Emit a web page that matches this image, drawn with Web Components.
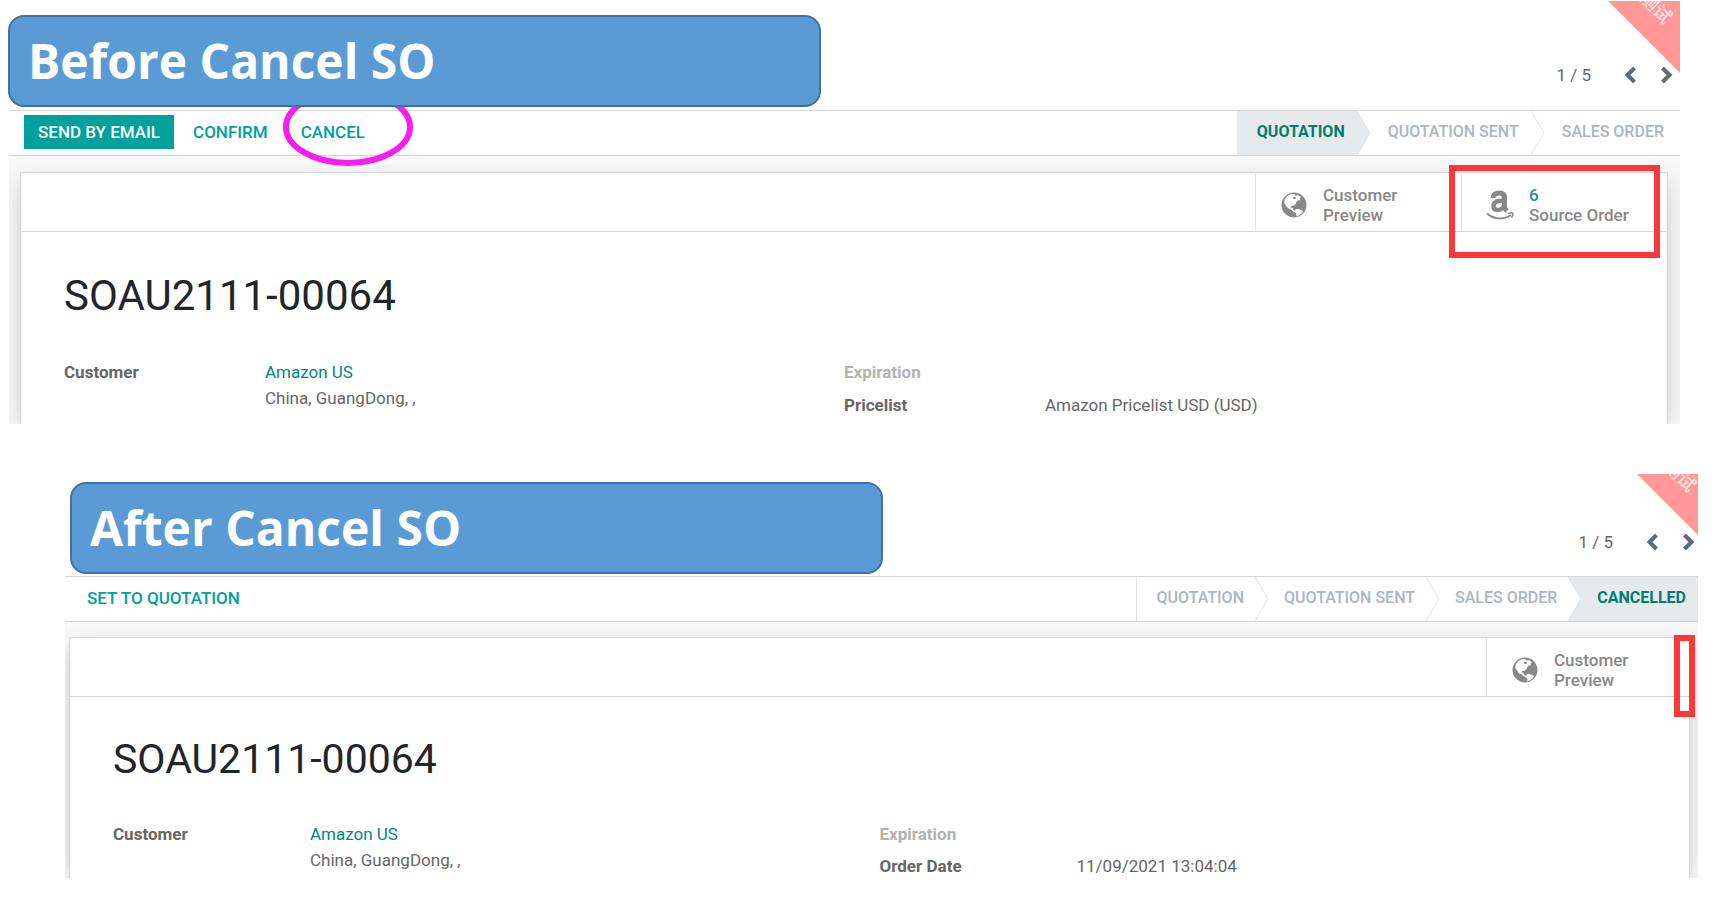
<!DOCTYPE html>
<html lang="en">
<head>
<meta charset="UTF-8">
<meta name="viewport" content="width=device-width, initial-scale=1.0">
<title>Cancel SO</title>
<style>
  body {
    margin: 0;
    padding: 1px 0 22px;
    background: #fff;
    color: #666;
    font-family: Roboto, "Noto Sans CJK SC", sans-serif;
    font-size: 17px;
  }
  .before {
    margin: 0 33px 0 9px;
    --header-height: 109px;
    --banner-margin: 14px 0 0 -1px;
    --pager-top: 62px;
    --title-size: 42px;
    --bar-left: 15px;
    --sheet-margin: 16px 12px 0 11px;
    --sheet-pad: 43px;
    --label-width: 201px;
    --stat-width: 206px;
    --row-gap: 13px;
    --title-top: 39px;
    --fields-top: 41px;
    --fields-bottom: 9px;
    --ribbon-size: 72px;
    --ribbon-right: 18px;
    --ribbon-bottom: 26px;
    --step-left: 17px;
    --step-right: 12px;
    --step-end: 16px;
  }
  .after {
    margin: 50px 15px 0 65px;
    --header-height: 102px;
    --banner-margin: 8px 0 0 5px;
    --pager-top: 56px;
    --title-size: 41px;
    --bar-left: 8px;
    --sheet-margin: 15px 8px 0 4px;
    --sheet-pad: 43px;
    --label-width: 197px;
    --stat-width: 203px;
    --row-gap: 12px;
    --title-top: 37px;
    --fields-top: 40px;
    --fields-bottom: 2px;
    --ribbon-size: 61px;
    --ribbon-right: 12px;
    --ribbon-bottom: 21px;
    --step-left: 15px;
    --step-right: 11px;
    --step-end: 12px;
  }
</style>
</head>
<body>
  <order-panel class="before" name="SOAU2111-00064">
    <title-banner slot="banner">Before Cancel SO</title-banner>
    <record-pager slot="pager">1 / 5</record-pager>
    <action-button slot="actions" primary>Send by Email</action-button>
    <action-button slot="actions">Confirm</action-button>
    <action-button slot="actions" ring>Cancel</action-button>
    <status-step slot="steps" active>Quotation</status-step>
    <status-step slot="steps">Quotation Sent</status-step>
    <status-step slot="steps">Sales Order</status-step>
    <stat-button slot="stats" icon="globe">Customer<br>Preview</stat-button>
    <stat-button slot="stats" icon="amazon" mark="wide"><b>6</b><br>Source Order</stat-button>
    <field-row slot="left" label="Customer"><a href="#">Amazon US</a><br>China, GuangDong, ,</field-row>
    <field-row slot="right" label="Expiration" muted></field-row>
    <field-row slot="right" label="Pricelist">Amazon Pricelist USD (USD)</field-row>
  </order-panel>

  <order-panel class="after" name="SOAU2111-00064">
    <title-banner slot="banner">After Cancel SO</title-banner>
    <record-pager slot="pager">1 / 5</record-pager>
    <action-button slot="actions">Set to Quotation</action-button>
    <status-step slot="steps" bordered>Quotation</status-step>
    <status-step slot="steps">Quotation Sent</status-step>
    <status-step slot="steps">Sales Order</status-step>
    <status-step slot="steps" active>Cancelled</status-step>
    <stat-button slot="stats" icon="globe" mark="narrow">Customer<br>Preview</stat-button>
    <field-row slot="left" label="Customer"><a href="#">Amazon US</a><br>China, GuangDong, ,</field-row>
    <field-row slot="right" label="Expiration" muted></field-row>
    <field-row slot="right" label="Order Date">11/09/2021 13:04:04</field-row>
  </order-panel>

<script>
// One order form: header, status bar and sheet
class OrderPanel extends HTMLElement {
  constructor() {
    super();
    this.attachShadow({ mode: 'open' });
    this.shadowRoot.innerHTML = `
      <style>
        :host { display: block; position: relative; }
        header {
          display: flex;
          justify-content: space-between;
          align-items: flex-start;
          height: var(--header-height);
        }
        .bar {
          display: flex;
          justify-content: space-between;
          align-items: stretch;
          height: 44px;
          border-top: 1px solid #d5d9dc;
          border-bottom: 1px solid #d0d4d8;
        }
        .actions { display: flex; align-items: center; gap: 5px; padding-left: var(--bar-left); margin-top: -3px; }
        .steps { display: flex; }
        .back { overflow: hidden; background: linear-gradient(#f9f9f9, #f4f4f4 30px); }
        .sheet {
          margin: var(--sheet-margin);
          background: #fff;
          border: 1px solid #d8d8d8;
          border-bottom: 0;
          box-shadow: 0 5px 20px -10px rgba(0, 0, 0, .5);
        }
        .stats {
          display: flex;
          justify-content: flex-end;
          height: 58px;
          border-bottom: 1px solid #d5d9dc;
        }
        h1 {
          margin: var(--title-top) var(--sheet-pad) 0;
          color: #212529;
          font-size: var(--title-size);
          line-height: 50px;
          font-weight: 400;
        }
        .fields {
          display: grid;
          grid-template-columns: 1fr 1fr;
          padding: var(--fields-top) var(--sheet-pad) var(--fields-bottom);
        }
        .col { display: flex; flex-direction: column; gap: var(--row-gap); }
      </style>
      <header>
        <slot name="banner"></slot>
        <slot name="pager"></slot>
      </header>
      <test-ribbon></test-ribbon>
      <div class="bar">
        <div class="actions"><slot name="actions"></slot></div>
        <div class="steps"><slot name="steps"></slot></div>
      </div>
      <div class="back">
        <div class="sheet">
          <div class="stats"><slot name="stats"></slot></div>
          <h1></h1>
          <div class="fields">
            <div class="col"><slot name="left"></slot></div>
            <div class="col"><slot name="right"></slot></div>
          </div>
        </div>
      </div>`;
  }
  connectedCallback() {
    this.shadowRoot.querySelector('h1').textContent = this.getAttribute('name') || '';
  }
}

class TitleBanner extends HTMLElement {
  constructor() {
    super();
    this.attachShadow({ mode: 'open' });
    this.shadowRoot.innerHTML = `
      <style>
        :host {
          display: block;
          box-sizing: border-box;
          position: relative;
          z-index: 2;
          width: 50%;
          max-width: 813px;
          height: 92px;
          margin: var(--banner-margin);
          padding: 0 18px;
          border: 2px solid #41719c;
          border-radius: 16px;
          background: #5b9bd5;
          color: #fff;
          font-family: "Open Sans", "Noto Sans", sans-serif;
          font-size: 48px;
          line-height: 88px;
          font-weight: 700;
        }
      </style>
      <slot></slot>`;
  }
}

class RecordPager extends HTMLElement {
  constructor() {
    super();
    this.attachShadow({ mode: 'open' });
    this.shadowRoot.innerHTML = `
      <style>
        :host { display: flex; align-items: center; margin-top: var(--pager-top); padding-right: 7px; line-height: 24px; }
        button { display: flex; padding: 0; border: 0; background: none; }
        .prev { margin: 0 25px 0 33px; }
        svg { fill: none; stroke: #5f6b76; stroke-width: 4; }
        :host-context(.after) { padding-right: 3px; }
      </style>
      <slot></slot>
      <button class="prev" aria-label="Previous"><svg width="12" height="18"><path d="M10.500 2 3.500 9l7 7"/></svg></button>
      <button aria-label="Next"><svg width="12" height="18"><path d="M1.500 2 8.500 9l-7 7"/></svg></button>`;
  }
}

// Corner ribbon of the test database
class TestRibbon extends HTMLElement {
  constructor() {
    super();
    this.attachShadow({ mode: 'open' });
    this.shadowRoot.innerHTML = `
      <style>
        :host {
          position: absolute;
          top: 0;
          right: 0;
          width: var(--ribbon-size);
          height: var(--ribbon-size);
          overflow: hidden;
          clip-path: polygon(0 0, 100% 0, 100% 100%);
          background: #ff9896;
        }
        span {
          position: absolute;
          right: var(--ribbon-right);
          bottom: calc(100% - var(--ribbon-bottom));
          color: #ffe3e2;
          font-size: 18px;
          line-height: 18px;
          font-weight: 500;
          white-space: nowrap;
          transform: rotate(45deg);
          transform-origin: 100% 100%;
        }
      </style>
      <span>测试</span>`;
  }
}

class ActionButton extends HTMLElement {
  constructor() {
    super();
    this.attachShadow({ mode: 'open' });
    this.shadowRoot.innerHTML = `
      <style>
        :host { display: block; position: relative; }
        button {
          display: block;
          height: 34px;
          padding: 0 14px;
          border: 0;
          background: none;
          color: #00a09d;
          font: 500 17px Roboto, sans-serif;
          text-transform: uppercase;
          white-space: nowrap;
        }
        :host([primary]) button { background: #00a09d; color: #fff; }
        svg { display: none; }
        :host([ring]) svg {
          display: block;
          position: absolute;
          z-index: 1;
          left: -4px;
          top: -28px;
          fill: none;
          stroke: #f81cf0;
          stroke-width: 6;
          pointer-events: none;
        }
      </style>
      <button><slot></slot></button>
      <svg width="130" height="80"><ellipse cx="65" cy="40" rx="62" ry="36"/></svg>`;
  }
}

class StatusStep extends HTMLElement {
  constructor() {
    super();
    this.attachShadow({ mode: 'open' });
    this.shadowRoot.innerHTML = `
      <style>
        :host { display: flex; align-items: stretch; --fill: #fff; }
        :host([active]) { --fill: #e7eaed; }
        :host([bordered]) { border-left: 1px solid #dee2e6; }
        button {
          padding: 0 var(--step-right) 3px var(--step-left);
          border: 0;
          background: var(--fill);
          color: #adb5bd;
          font: 500 16px Roboto, sans-serif;
          text-transform: uppercase;
          white-space: nowrap;
        }
        :host([active]) button { color: #017e6b; font-weight: 700; }
        :host(:first-of-type) button { padding-left: 20px; }
        svg { display: block; width: 14px; height: 44px; fill: var(--fill); stroke: #dee2e6; }
        :host(:last-of-type) svg { display: none; }
        :host(:last-of-type) button { padding-right: var(--step-end); }
        .next { fill: var(--next, #fff); stroke: none; }
      </style>
      <button><slot></slot></button>
      <svg viewBox="0 0 14 44">
        <rect class="next" width="14" height="44"/>
        <path d="M0 0 13 22 0 44"/>
      </svg>`;
  }
  connectedCallback() {
    // the gap right of the arrow takes the colour of the step that follows
    const next = this.nextElementSibling;
    if (next && next.hasAttribute('active')) this.style.setProperty('--next', '#e7eaed');
  }
}

const ICONS = {
  globe: `<svg width="28" height="30" viewBox="0 0 28 30">
      <circle cx="14" cy="15" r="12.500" fill="#888"/>
      <path fill="#fff" d="M7 6.200 11 4l3.500.2 1 1.600 2.500-.8 3 2.300-1.600 1.400 1.100 1.500-2.600.3-1.700 1.800-.8 2-2.300 1.700-1.300-.2-1.500 1.700 2.300.6.5 2 2 .7.4 1.700-1.700-.5-3-2.400-2.500-1.100-2.300-2.800L4.300 13l.3-3.200z"/>
      <path fill="#888" d="m13.500 6.500 2 .5.500 1.500-1.700.7-1.400-1.200z"/>
      <path fill="#fff" d="m15.500 19.500 2.500-.7 2.500 1 2.600 1.300-1.500 2.400-2.900 1.900-2.500 1 .2-2.500-1.300-2z"/>
    </svg>`,
  amazon: `<svg width="28" height="30" viewBox="0 0 28 30" fill="none" stroke="#888">
      <path stroke-width="5" d="M7 8C7.500 3.500 11 3 13.500 3c3.500 0 5 2 5 5v9c0 1.500.8 2.500 2.500 4"/>
      <path stroke-width="4.500" d="M18.500 10.500C12 10.500 7.500 11.500 7.500 16c0 3 2 4 4 4 4 0 7-2.500 7-7"/>
      <path stroke-width="2" d="M1 23.500c7 6 17 6.500 24 1.500"/>
      <path stroke-width="1.500" d="M22 23.500c3-1 5-1 5 0s-.5 2.500-1.500 4"/>
    </svg>`
};

class StatButton extends HTMLElement {
  constructor() {
    super();
    this.attachShadow({ mode: 'open' });
    this.shadowRoot.innerHTML = `
      <style>
        :host {
          display: block;
          box-sizing: border-box;
          position: relative;
          width: var(--stat-width);
          border-left: 1px solid #dee2e6;
        }
        button {
          display: flex;
          align-items: center;
          gap: 15px;
          width: 100%;
          height: 100%;
          padding: 5px 0 0 24px;
          border: 0;
          background: none;
          color: #888;
          font: 500 17px/20px Roboto, sans-serif;
          text-align: left;
          white-space: nowrap;
        }
        svg { display: block; }
        ::slotted(b) { color: #2a9187; font-weight: 500; }
        .mark { display: none; position: absolute; box-sizing: border-box; border: 6px solid #fb3838; }
        :host([mark]) .mark { display: block; }
        :host([mark="wide"]) .mark { left: -13px; right: 7px; top: -8px; height: 93px; }
        :host([mark="narrow"]) .mark { right: -6px; width: 21px; top: -3px; height: 82px; }
      </style>
      <button><span class="icon"></span><span><slot></slot></span></button>
      <div class="mark"></div>`;
  }
  connectedCallback() {
    this.shadowRoot.querySelector('.icon').innerHTML = ICONS[this.getAttribute('icon')] || '';
  }
}

class FieldRow extends HTMLElement {
  constructor() {
    super();
    this.attachShadow({ mode: 'open' });
    this.shadowRoot.innerHTML = `
      <style>
        :host { display: flex; line-height: 20px; color: #666; }
        .label { flex: none; width: var(--label-width); font-weight: 700; }
        .value { line-height: 26px; margin: -3px 0; }
        :host([muted]) .label { color: #b2b2b2; }
        ::slotted(a) { color: #008784; text-decoration: none; }
      </style>
      <div class="label"></div>
      <div class="value"><slot></slot></div>`;
  }
  connectedCallback() {
    this.shadowRoot.querySelector('.label').textContent = this.getAttribute('label') || '';
  }
}

customElements.define('order-panel', OrderPanel);
customElements.define('title-banner', TitleBanner);
customElements.define('record-pager', RecordPager);
customElements.define('test-ribbon', TestRibbon);
customElements.define('action-button', ActionButton);
customElements.define('status-step', StatusStep);
customElements.define('stat-button', StatButton);
customElements.define('field-row', FieldRow);
</script>
</body>
</html>
